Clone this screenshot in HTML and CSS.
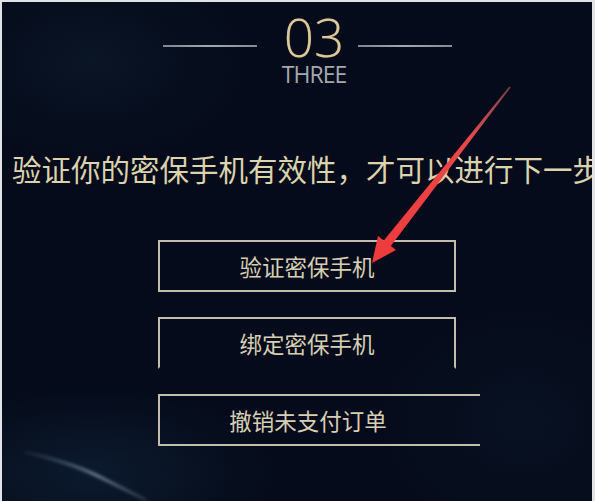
FILE: index.html
```html
<!DOCTYPE html>
<html lang="zh-CN">
<head>
<meta charset="utf-8">
<title>验证密保手机</title>
<link rel="stylesheet" href="styles.css">
</head>
<body>
<div class="frame">
  <div class="page">
    <div class="heading">
      <span class="rule"></span>
      <div class="step">
        <span class="step-num">03</span>
        <span class="step-word">THREE</span>
      </div>
      <span class="rule rule-right"></span>
    </div>
    <p class="lead">验证你的密保手机有效性，才可以进行下一步</p>
    <div class="actions">
      <div class="btn">验证密保手机</div>
      <div class="btn btn-open-bottom">绑定密保手机</div>
      <div class="btn btn-wide">撤销未支付订单</div>
    </div>
    <svg class="streak" width="595" height="501" viewBox="0 0 595 501" aria-hidden="true">
      <defs>
        <filter id="blur" x="-20%" y="-20%" width="140%" height="140%">
          <feGaussianBlur stdDeviation="1.8"/>
        </filter>
        <linearGradient id="sg" x1="0" y1="0" x2="1" y2="0">
          <stop offset="0" stop-color="#5f7890" stop-opacity="0.1"/>
          <stop offset="0.6" stop-color="#9fb3c6" stop-opacity="0.6"/>
          <stop offset="1" stop-color="#6d8398" stop-opacity="0.25"/>
        </linearGradient>
      </defs>
      <path d="M24 452 Q70 462 100 477 Q122 488 146 500" fill="none" stroke="url(#sg)" stroke-width="3.4" filter="url(#blur)"/>
    </svg>
  </div>
  <svg class="arrow" width="595" height="501" viewBox="0 0 595 501" aria-hidden="true">
    <defs>
      <linearGradient id="ag" x1="510" y1="87" x2="372" y2="262" gradientUnits="userSpaceOnUse">
        <stop offset="0" stop-color="#d9706c" stop-opacity="0.55"/>
        <stop offset="0.3" stop-color="#e8484a"/>
        <stop offset="1" stop-color="#f03a3c"/>
      </linearGradient>
    </defs>
    <polygon points="510.6,87.4 509.4,86.6 383.6,240.7 390.6,246.2" fill="url(#ag)"/>
    <polygon points="372,263 378,236 396,250" fill="#ee3b3d"/>
  </svg>
</div>
</body>
</html>
```

FILE: styles.css
```css
html, body {
  margin: 0;
  padding: 0;
}

body {
  width: 595px;
  height: 501px;
  overflow: hidden;
  background: #dfe1e5;
}

.frame {
  position: relative;
  width: 595px;
  height: 501px;
  box-sizing: border-box;
  padding: 2px 3px 0 2px;
  background: #e1e3e7;
}

.page {
  position: relative;
  height: 499px;
  overflow: hidden;
  background:
    radial-gradient(ellipse 260px 120px at 90px 470px, rgba(20, 45, 70, 0.45), rgba(20, 45, 70, 0) 70%),
    radial-gradient(ellipse 220px 140px at 90px 60px, rgba(18, 38, 60, 0.35), rgba(18, 38, 60, 0) 70%),
    radial-gradient(ellipse 200px 160px at 520px 420px, rgba(14, 30, 52, 0.35), rgba(14, 30, 52, 0) 70%),
    #050b1a;
}

.heading {
  display: flex;
  align-items: flex-start;
  padding: 5px 0 0 161px;
}

.rule {
  display: block;
  width: 94px;
  height: 2px;
  margin-top: 38px;
  background: linear-gradient(90deg, #7f868f, #a3a9b0 50%, #858b93);
}

.rule-right {
  margin-left: 12px;
}

.step {
  display: flex;
  flex-direction: column;
  align-items: center;
  margin-left: 25px;
  width: 64px;
}

.step-num {
  display: block;
  font-family: "Open Sans", "Liberation Sans", sans-serif;
  font-weight: 350;
  font-size: 53px;
  line-height: 60px;
  color: #dcc898;
  text-shadow: 0 0 1px rgba(240, 225, 180, 0.35);
}

.step-word {
  display: block;
  margin-top: -4px;
  font-family: "Open Sans", "Liberation Sans", sans-serif;
  font-weight: 400;
  font-size: 23px;
  line-height: 22px;
  letter-spacing: -1px;
  color: #a4a8ae;
}

.lead {
  margin: 63px 0 0;
  padding-left: 10px;
  font-family: "Noto Sans CJK SC", "Noto Sans", sans-serif;
  font-size: 29.5px;
  line-height: 40px;
  color: #dbd2ae;
  white-space: nowrap;
}

.actions {
  display: flex;
  flex-direction: column;
  gap: 25px;
  margin-top: 52px;
  padding-left: 156px;
}

.btn {
  display: flex;
  align-items: center;
  justify-content: center;
  box-sizing: border-box;
  width: 298px;
  height: 52px;
  border: 2px solid #c3beac;
  font-family: "Noto Sans CJK SC", "Noto Sans", sans-serif;
  font-size: 22.5px;
  color: #d6cfb4;
}

.btn-open-bottom {
  border-bottom-color: transparent;
}

.btn-wide {
  width: 322px;
  padding-right: 24px;
  border-right: none;
}

.streak {
  position: absolute;
  left: -2px;
  top: -2px;
  pointer-events: none;
}

.arrow {
  position: absolute;
  left: 0;
  top: 0;
  pointer-events: none;
}
```
